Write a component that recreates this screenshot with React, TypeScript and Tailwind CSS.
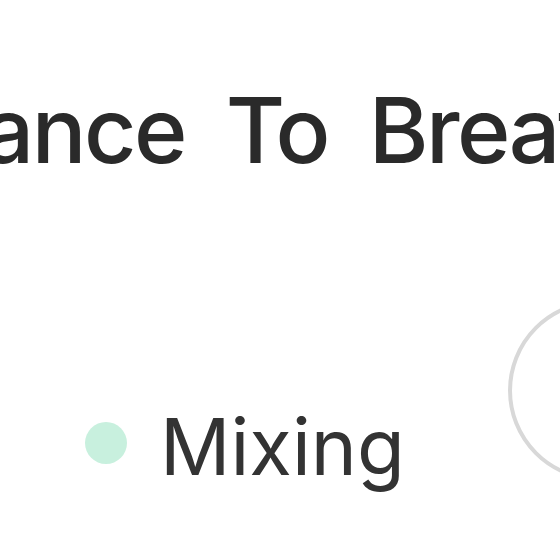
import React from 'react';

const App: React.FC = () => {
    return (
        <div className="w-[560px] h-[560px] overflow-hidden bg-white flex flex-col" style={{ fontFamily: 'Inter, "Noto Sans", sans-serif' }}>
            <div className="pt-[85px] flex">
                <h1 className="ml-[-134px] whitespace-nowrap text-[91px] leading-none font-medium tracking-[-2.5px] [word-spacing:19px] text-[#2a2a2a]">
                    Chance To Breathe
                </h1>
            </div>

            <div className="mt-[124px] flex items-start">
                <div className="mt-[108px] pl-[85px] flex items-center gap-[33px]">
                    <span className="w-[42px] h-[42px] mb-[8px] rounded-full bg-[#c8f0de] shrink-0" />
                    <span className="text-[78px] leading-none text-[#333333] whitespace-nowrap">Mixing</span>
                </div>
                <div className="ml-auto mr-[-129px] w-[181px] h-[181px] rounded-full border-4 border-[#d8d8d8] shrink-0" />
            </div>
        </div>
    );
};

export default App;
